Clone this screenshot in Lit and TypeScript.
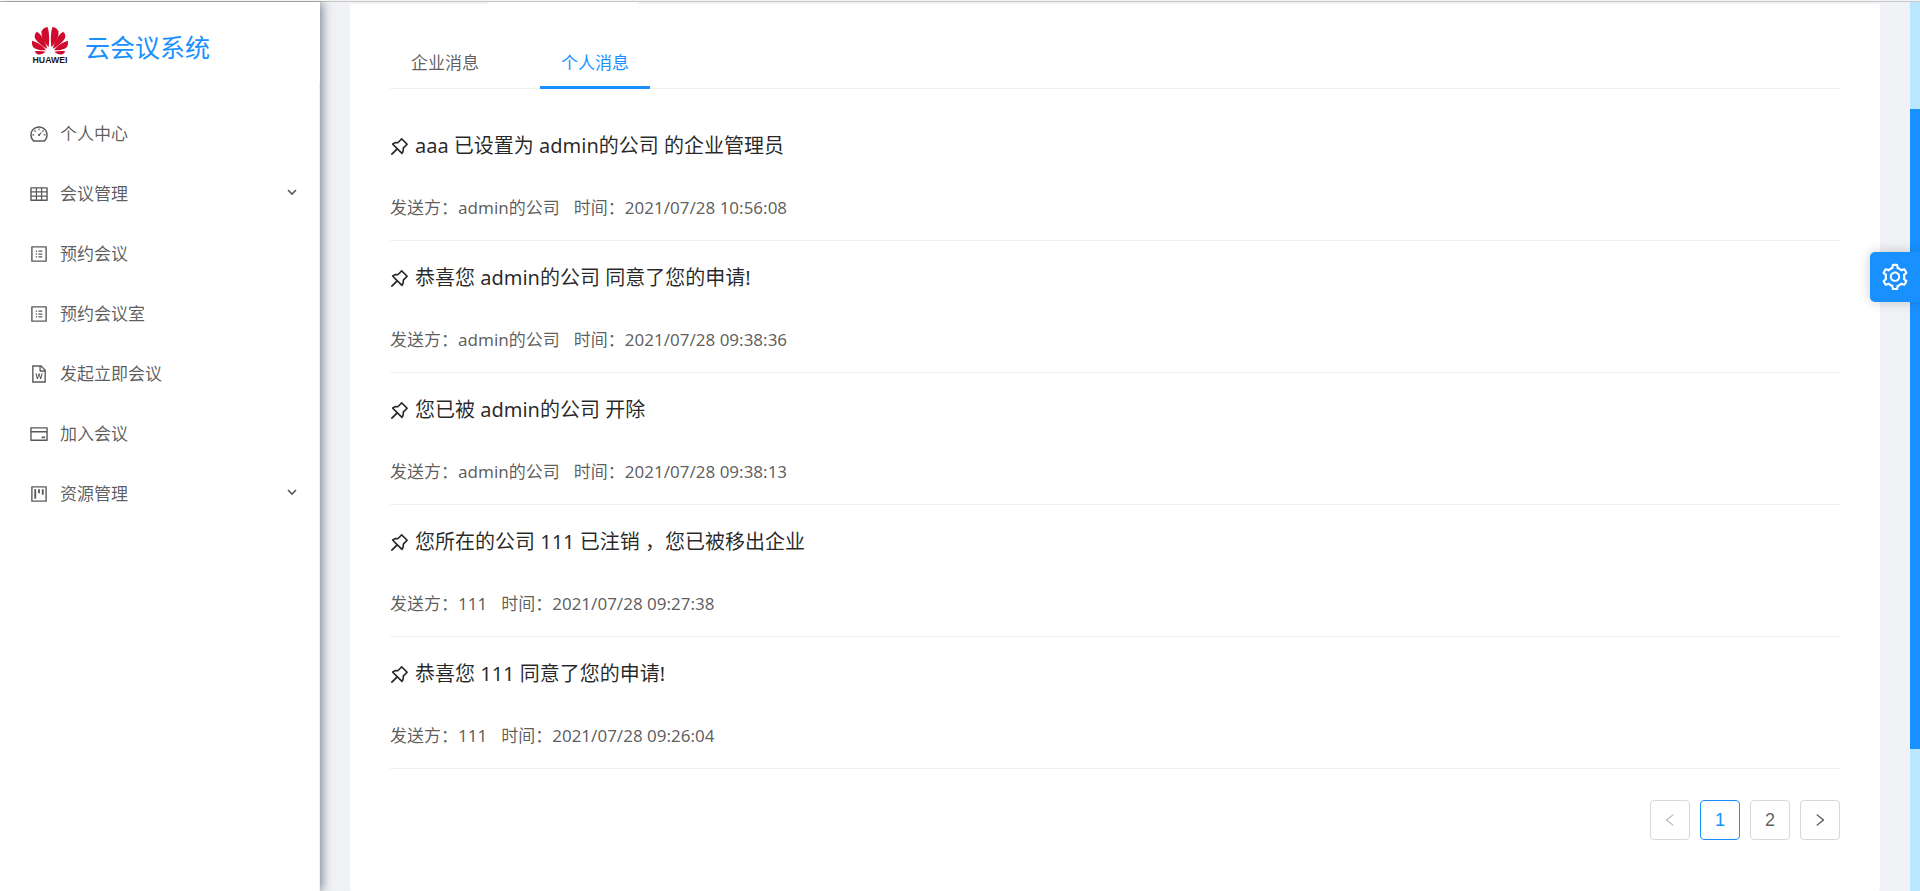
import { LitElement, html, css, svg, nothing } from "lit";
import { customElement, state } from "lit/decorators.js";

const ICONS: Record<string, string[]> = {
  dashboard: [
    "M924.8 385.6a446.700 446.700 0 0 0-96-142.400 446.700 446.700 0 0 0-142.400-96C631.100 123.800 572.500 112 512 112s-119.100 11.800-174.400 35.200a446.700 446.700 0 0 0-142.400 96 446.700 446.700 0 0 0-96 142.400C75.800 440.900 64 499.500 64 560c0 132.700 58.300 257.700 159.900 343.100l1.700 1.400c5.800 4.800 13.100 7.500 20.600 7.500h531.700c7.500 0 14.800-2.700 20.600-7.500l1.700-1.400C901.700 817.700 960 692.700 960 560c0-60.500-11.900-119.100-35.200-174.400zM761.400 836H262.600A371.120 371.120 0 0 1 140 560c0-99.400 38.700-192.800 109-263 70.300-70.300 163.700-109 263-109 99.400 0 192.800 38.700 263 109 70.300 70.300 109 163.700 109 263 0 105.600-44.500 205.500-122.600 276z",
    "M623.500 421.500a8.030 8.030 0 0 0-11.300 0L527.700 506c-18.700-5-39.400-.2-54.100 14.500a55.950 55.950 0 0 0 0 79.200 55.950 55.950 0 0 0 79.200 0 55.870 55.870 0 0 0 14.500-54.100l84.500-84.500c3.100-3.100 3.100-8.200 0-11.300l-28.300-28.300zM490 320h44c4.400 0 8-3.600 8-8v-80c0-4.400-3.600-8-8-8h-44c-4.400 0-8 3.600-8 8v80c0 4.400 3.600 8 8 8zm260 218v44c0 4.400 3.600 8 8 8h80c4.400 0 8-3.600 8-8v-44c0-4.400-3.600-8-8-8h-80c-4.400 0-8 3.600-8 8zm12.700-197.200l-31.100-31.100a8.030 8.030 0 0 0-11.300 0l-56.600 56.600a8.030 8.030 0 0 0 0 11.300l31.100 31.100c3.100 3.100 8.200 3.100 11.300 0l56.600-56.600c3.100-3.100 3.100-8.200 0-11.300zm-458.600-31.100a8.030 8.030 0 0 0-11.300 0l-31.100 31.100a8.030 8.030 0 0 0 0 11.300l56.600 56.600c3.100 3.100 8.200 3.100 11.300 0l31.100-31.100c3.100-3.100 3.100-8.200 0-11.300l-56.600-56.600zM262 530h-80c-4.400 0-8 3.600-8 8v44c0 4.400 3.600 8 8 8h80c4.400 0 8-3.600 8-8v-44c0-4.400-3.600-8-8-8z",
  ],
  table: [
    "M928 160H96c-17.700 0-32 14.300-32 32v640c0 17.700 14.300 32 32 32h832c17.700 0 32-14.300 32-32V192c0-17.700-14.300-32-32-32zm-40 208H676V232h212v136zm0 224H676V432h212v160zM412 432h200v160H412V432zm200-64H412V232h200v136zm-476 64h212v160H136V432zm0-200h212v136H136V232zm0 424h212v136H136V656zm276 0h200v136H412V656zm476 136H676V656h212v136z",
  ],
  profile: [
    "M880 112H144c-17.700 0-32 14.300-32 32v736c0 17.700 14.300 32 32 32h736c17.700 0 32-14.300 32-32V144c0-17.700-14.300-32-32-32zm-40 728H184V184h656v656z",
    "M492 400h184c4.400 0 8-3.600 8-8v-48c0-4.400-3.600-8-8-8H492c-4.400 0-8 3.600-8 8v48c0 4.400 3.600 8 8 8zm0 144h184c4.400 0 8-3.600 8-8v-48c0-4.400-3.600-8-8-8H492c-4.400 0-8 3.600-8 8v48c0 4.400 3.600 8 8 8zm0 144h184c4.400 0 8-3.600 8-8v-48c0-4.400-3.600-8-8-8H492c-4.400 0-8 3.600-8 8v48c0 4.400 3.600 8 8 8zM340 368a40 40 0 1 0 80 0 40 40 0 1 0-80 0zm0 144a40 40 0 1 0 80 0 40 40 0 1 0-80 0zm0 144a40 40 0 1 0 80 0 40 40 0 1 0-80 0z",
  ],
  word: [
    "M854.600 288.600L639.400 73.400c-6-6-14.100-9.400-22.600-9.400H192c-17.700 0-32 14.300-32 32v832c0 17.700 14.300 32 32 32h640c17.700 0 32-14.300 32-32V311.300c0-8.500-3.400-16.700-9.400-22.700zM790.200 326H602V137.800L790.200 326zm1.800 562H232V136h302v216a42 42 0 0 0 42 42h216v494z",
    "M528.100 472h-32.200c-5.500 0-10.300 3.700-11.600 9.100L434.600 680l-46.100-198.700c-1.300-5.400-6.100-9.300-11.700-9.300h-35.400a12.020 12.020 0 0 0-11.600 15.100l74.200 276c1.400 5.200 6.200 8.900 11.600 8.900h32c5.400 0 10.200-3.600 11.600-8.900l52.800-197 52.800 197c1.400 5.200 6.200 8.900 11.600 8.900h31.800c5.400 0 10.200-3.600 11.600-8.900l74.400-276a12.040 12.040 0 0 0-11.600-15.100H647c-5.600 0-10.400 3.900-11.700 9.300l-45.800 199.100-49.800-199.300c-1.300-5.400-6.100-9.100-11.600-9.100z",
  ],
  card: [
    "M928 160H96c-17.700 0-32 14.300-32 32v640c0 17.700 14.300 32 32 32h832c17.700 0 32-14.300 32-32V192c0-17.700-14.300-32-32-32zm-792 72h752v120H136V232zm752 560H136V440h752v352zm-237-64h165c4.400 0 8-3.600 8-8v-72c0-4.400-3.600-8-8-8H651c-4.400 0-8 3.600-8 8v72c0 4.400 3.600 8 8 8z",
  ],
  project: [
    "M280 752h80c4.400 0 8-3.600 8-8V280c0-4.400-3.600-8-8-8h-80c-4.400 0-8 3.600-8 8v464c0 4.400 3.600 8 8 8zm192-280h80c4.400 0 8-3.600 8-8V280c0-4.400-3.600-8-8-8h-80c-4.400 0-8 3.600-8 8v184c0 4.400 3.600 8 8 8zm192 72h80c4.400 0 8-3.600 8-8V280c0-4.400-3.600-8-8-8h-80c-4.400 0-8 3.600-8 8v256c0 4.400 3.600 8 8 8z",
    "M880 112H144c-17.700 0-32 14.300-32 32v736c0 17.700 14.300 32 32 32h736c17.700 0 32-14.300 32-32V144c0-17.700-14.300-32-32-32zm-40 728H184V184h656v656z",
  ],
  pushpin: [
    "M878.300 392.100L631.900 145.700c-6.500-6.500-15-9.700-23.500-9.700s-17 3.200-23.500 9.700L423.800 306.900c-12.200-1.400-24.500-2-36.800-2-73.200 0-146.400 24.100-206.500 72.300-15.400 12.300-16.600 35.400-2.700 49.400l181.700 181.700-215.400 215.200a15.800 15.800 0 0 0-4.600 9.800l-3.400 37.200c-.9 9.400 6.600 17.400 15.900 17.400.5 0 1 0 1.500-.1l37.200-3.400c3.700-.3 7.200-2 9.800-4.600l215.400-215.400 181.700 181.700c6.500 6.500 15 9.700 23.500 9.700 9.700 0 19.300-4.200 25.900-12.400 56.300-70.300 79.700-158.300 70.200-243.400l161.100-161.100c12.900-12.800 12.900-33.800 0-46.800zM666.200 549.300l-24.500 24.500 3.800 34.400a259.920 259.920 0 0 1-30.400 153.900L262 408.800c12.900-7.100 26.300-13.100 40.300-17.900 27.200-9.400 55.700-14.100 84.700-14.100 9.600 0 19.300.5 28.900 1.600l34.400 3.800 24.500-24.500L608.500 224 800 415.500 666.200 549.300z",
  ],
  left: [
    "M724 218.300V141c0-6.700-7.700-10.400-12.900-6.300L260.300 486.800a31.860 31.860 0 0 0 0 50.300l450.800 352.100c5.300 4.100 12.900.4 12.900-6.300v-77.300c0-4.900-2.300-9.600-6.100-12.600l-360-281 360-281.100c3.800-3 6.100-7.700 6.100-12.600z",
  ],
  right: [
    "M765.700 486.800L314.900 134.700A7.970 7.970 0 0 0 302 141v77.300c0 4.900 2.300 9.600 6.100 12.600l360 281.100-360 281.100c-3.900 3-6.100 7.700-6.100 12.600V883c0 6.700 7.700 10.400 12.900 6.300l450.800-352.100a31.960 31.960 0 0 0 0-50.400z",
  ],
  setting: [
    "M924.800 625.700l-65.500-56c3.100-19 4.700-38.400 4.700-57.800s-1.600-38.800-4.700-57.800l65.500-56a32.030 32.030 0 0 0 9.300-35.200l-.9-2.600a443.740 443.740 0 0 0-79.700-137.900l-1.800-2.100a32.120 32.120 0 0 0-35.100-9.500l-81.300 28.900c-30-24.600-63.500-44-99.700-57.600l-15.700-85a32.050 32.050 0 0 0-25.800-25.700l-2.700-.5c-52.100-9.400-106.900-9.400-159 0l-2.700.5a32.050 32.050 0 0 0-25.800 25.700l-15.800 85.400a351.860 351.860 0 0 0-99 57.400l-81.900-29.100a32 32 0 0 0-35.100 9.500l-1.800 2.100a446.020 446.020 0 0 0-79.700 137.900l-.9 2.600c-4.500 12.500-.8 26.500 9.300 35.200l66.300 56.600c-3.100 18.800-4.600 38-4.600 57.100 0 19.200 1.500 38.400 4.600 57.100L99 625.500a32.030 32.030 0 0 0-9.300 35.200l.9 2.600c18.100 50.400 44.900 96.900 79.700 137.900l1.800 2.100a32.120 32.120 0 0 0 35.100 9.500l81.900-29.100c29.800 24.500 63.100 43.900 99 57.400l15.800 85.400a32.050 32.050 0 0 0 25.800 25.700l2.700.5a449.400 449.400 0 0 0 159 0l2.700-.5a32.050 32.050 0 0 0 25.800-25.700l15.700-85a350 350 0 0 0 99.700-57.600l81.300 28.900a32 32 0 0 0 35.100-9.500l1.800-2.100c34.800-41.100 61.600-87.500 79.700-137.900l.9-2.600c4.500-12.300.8-26.300-9.300-35zM788.300 465.900c2.500 15.100 3.800 30.600 3.800 46.100s-1.300 31-3.800 46.100l-6.600 40.100 74.700 63.900a370.030 370.030 0 0 1-42.600 73.600L721 702.800l-31.400 25.800c-23.900 19.600-50.500 35-79.300 45.800l-38.100 14.300-17.900 97a377.500 377.500 0 0 1-85 0l-17.900-97.200-37.800-14.500c-28.500-10.800-55-26.200-78.700-45.700l-31.400-25.900-93.400 33.200c-17-22.900-31.200-47.600-42.600-73.600l75.500-64.500-6.500-40c-2.400-14.900-3.700-30.300-3.700-45.500 0-15.300 1.200-30.600 3.700-45.500l6.500-40-75.500-64.500c11.300-26.100 25.600-50.700 42.600-73.600l93.400 33.200 31.400-25.900c23.700-19.500 50.200-34.900 78.700-45.700l37.900-14.300 17.900-97.200c28.100-3.200 56.800-3.200 85 0l17.900 97 38.100 14.300c28.700 10.800 55.400 26.200 79.300 45.800l31.400 25.800 92.800-32.900c17 22.900 31.200 47.600 42.600 73.600L781.800 426l6.500 39.900z",
    "M512 326c-97.200 0-176 78.800-176 176s78.800 176 176 176 176-78.800 176-176-78.800-176-176-176zm79.200 255.200A111.600 111.600 0 0 1 512 614c-29.900 0-58-11.700-79.200-32.800A111.600 111.600 0 0 1 400 502c0-29.900 11.700-58 32.800-79.200C454 401.600 482.100 390 512 390c29.900 0 58 11.600 79.200 32.800A111.600 111.600 0 0 1 624 502c0 29.900-11.700 58-32.800 79.200z",
  ],
};

const icon = (name: string) => html`
  <svg class="icon" viewBox="0 0 1024 1024" aria-hidden="true">
    ${ICONS[name].map((d) => svg`<path d=${d} />`)}
  </svg>
`;

interface MenuEntry {
  icon: string;
  label: string;
  children?: boolean;
}

interface Message {
  title: string;
  sender: string;
  time: string;
}

const MENU: MenuEntry[] = [
  { icon: "dashboard", label: "个人中心" },
  { icon: "table", label: "会议管理", children: true },
  { icon: "profile", label: "预约会议" },
  { icon: "profile", label: "预约会议室" },
  { icon: "word", label: "发起立即会议" },
  { icon: "card", label: "加入会议" },
  { icon: "project", label: "资源管理", children: true },
];

const MESSAGES: Message[] = [
  { title: "aaa 已设置为 admin的公司 的企业管理员", sender: "admin的公司", time: "2021/07/28 10:56:08" },
  { title: "恭喜您 admin的公司 同意了您的申请!", sender: "admin的公司", time: "2021/07/28 09:38:36" },
  { title: "您已被 admin的公司 开除", sender: "admin的公司", time: "2021/07/28 09:38:13" },
  { title: "您所在的公司 111 已注销 ，您已被移出企业", sender: "111", time: "2021/07/28 09:27:38" },
  { title: "恭喜您 111 同意了您的申请!", sender: "111", time: "2021/07/28 09:26:04" },
];

const reset = css`
  * {
    box-sizing: border-box;
  }
  button {
    font: inherit;
    color: inherit;
    background: none;
    border: 0;
    padding: 0;
    cursor: pointer;
  }
  ul {
    list-style: none;
    margin: 0;
    padding: 0;
  }
  a {
    color: inherit;
    text-decoration: none;
  }
  .icon {
    display: block;
    flex: none;
    width: 20px;
    height: 20px;
    fill: currentColor;
  }
`;

@customElement("side-menu")
export class SideMenu extends LitElement {
  static styles = [
    reset,
    css`
      :host {
        display: flex;
        flex-direction: column;
        background: #fff;
        box-shadow: 2px 0 10px rgba(0, 21, 41, 0.5);
      }
      .brand {
        display: flex;
        align-items: center;
        gap: 15px;
        height: 80px;
        padding: 10px 30px 0;
        color: #1890ff;
        font-size: 25px;
        line-height: 40px;
      }
      .logo {
        display: block;
        width: 40px;
        height: 40px;
      }
      .petal {
        fill: #cf0a2c;
      }
      .wordmark {
        font: 700 24px "Liberation Sans", Arial, sans-serif;
        fill: #231815;
      }
      .nav {
        flex: 1;
        border-right: 1px solid #f0f0f0;
      }
      .menu {
        display: grid;
        gap: 10px;
        padding-top: 27px;
      }
      .entry {
        display: flex;
        align-items: center;
        gap: 11px;
        width: 100%;
        height: 50px;
        padding: 0 21px 0 29px;
        text-align: left;
      }
      .label {
        flex: 1;
      }
      .chevron {
        display: block;
        width: 12px;
        height: 14px;
        fill: none;
        stroke: currentColor;
        stroke-width: 1.6;
      }
    `,
  ];

  render() {
    const petals = [
      "M46 56C36 44 24 28 27 12 29 5 36 1 43 0 48 12 49 38 46 56Z",
      "M42 60C32 55 14 42 9 31 6 24 9 17 14 13 26 20 39 42 42 60Z",
      "M39 64C28 65 9 62 3 54 0 49 0 43 1 38 15 42 32 53 39 64Z",
      "M38 68C33 73 23 77 16 75 12 74 10 71 8 67 18 65 29 66 38 68Z",
    ];
    return html`
      <div class="brand">
        <svg class="logo" viewBox="-5 0 110 110" role="img" aria-label="HUAWEI">
          <g class="petal">
            ${petals.map((d) => svg`<path d=${d} />`)}
            <g transform="translate(100 0) scale(-1 1)">${petals.map((d) => svg`<path d=${d} />`)}</g>
          </g>
          <text class="wordmark" x="50" y="98" text-anchor="middle">HUAWEI</text>
        </svg>
        <span>云会议系统</span>
      </div>
      <nav class="nav">
        <ul class="menu">
          ${MENU.map(
            (m) => html`<li>
              ${m.children
                ? html`<button class="entry" type="button" aria-expanded="false">
                    ${icon(m.icon)}<span class="label">${m.label}</span>
                    <svg class="chevron" viewBox="0 0 12 14" aria-hidden="true"><path d="M2 3 6 7 10 3" /></svg>
                  </button>`
                : html`<a class="entry" href="#">${icon(m.icon)}<span class="label">${m.label}</span></a>`}
            </li>`
          )}
        </ul>
      </nav>
    `;
  }
}

@customElement("message-panel")
export class MessagePanel extends LitElement {
  @state() private tab = 1;
  @state() private page = 1;

  static styles = [
    reset,
    css`
      :host {
        display: block;
        background: #fff;
        border-radius: 2px;
        padding: 30px 40px;
      }
      .tabs {
        display: flex;
        gap: 40px;
        border-bottom: 1px solid #f0f0f0;
      }
      .tab {
        height: 55px;
        padding: 6px 21px 0;
        margin-bottom: -1px;
        border-bottom: 3px solid transparent;
      }
      .tab[aria-selected="true"] {
        color: #1890ff;
        border-color: #1890ff;
      }
      .message {
        display: grid;
        gap: 31px;
        padding: 41px 0 17px;
        border-bottom: 1px solid #f0f0f0;
      }
      .message + .message {
        padding-top: 21px;
      }
      .title {
        display: flex;
        align-items: center;
        gap: 4px;
        margin: 0;
        color: rgba(0, 0, 0, 0.85);
        font-size: 20px;
        font-weight: inherit;
        line-height: 32px;
      }
      .title .icon {
        width: 23px;
        height: 23px;
        margin-left: -2px;
      }
      .meta {
        display: flex;
        gap: 14px;
        margin: 0;
        line-height: 30px;
      }
      .pager {
        display: flex;
        justify-content: flex-end;
        gap: 10px;
        padding-top: 31px;
      }
      .page {
        display: grid;
        place-items: center;
        width: 40px;
        height: 40px;
        border: 1px solid #d9d9d9;
        border-radius: 4px;
        font-family: "Liberation Sans", Arial, sans-serif;
        font-size: 18px;
      }
      .page[aria-current="page"] {
        color: #1890ff;
        border-color: #1890ff;
      }
      .page:disabled {
        color: rgba(0, 0, 0, 0.25);
      }
      .page .icon {
        width: 16px;
        height: 16px;
      }
    `,
  ];

  render() {
    return html`
      <div class="tabs" role="tablist">
        ${["企业消息", "个人消息"].map(
          (t, i) => html`<button
            class="tab"
            type="button"
            role="tab"
            aria-selected=${this.tab === i ? "true" : "false"}
            @click=${() => (this.tab = i)}
          >${t}</button>`
        )}
      </div>
      <ul>
        ${MESSAGES.map(
          (m) => html`<li class="message">
            <h4 class="title">${icon("pushpin")}<span>${m.title}</span></h4>
            <p class="meta"><span>发送方：${m.sender}</span><span>时间：${m.time}</span></p>
          </li>`
        )}
      </ul>
      <nav class="pager" aria-label="分页">
        <button class="page" type="button" aria-label="上一页" ?disabled=${this.page === 1} @click=${() => this.page--}>
          ${icon("left")}
        </button>
        ${[1, 2].map(
          (n) => html`<button
            class="page"
            type="button"
            aria-current=${this.page === n ? "page" : nothing}
            @click=${() => (this.page = n)}
          >${n}</button>`
        )}
        <button class="page" type="button" aria-label="下一页" ?disabled=${this.page === 2} @click=${() => this.page++}>
          ${icon("right")}
        </button>
      </nav>
    `;
  }
}

@customElement("app-root")
export class AppRoot extends LitElement {
  static styles = [
    reset,
    css`
      :host {
        display: block;
        height: 100vh;
        border-top: 1px solid #f2f4f4;
        box-sizing: border-box;
        overflow: hidden;
        background: #f0f2f5;
        color: rgba(0, 0, 0, 0.65);
        font-family: "Noto Sans", "Noto Sans CJK SC", sans-serif;
        font-size: 17px;
        line-height: 28px;
      }
      .layout {
        display: grid;
        grid-template-columns: 320px 1fr 10px;
        height: 100%;
        border-top: 1px solid #c8c8c8;
      }
      .content {
        display: grid;
        grid-template-rows: 2px 1fr;
        padding: 0 30px;
      }
      .notch {
        width: 150px;
        margin-left: 138px;
        background: #fff;
      }
      .track {
        display: grid;
        grid-template-rows: 107fr 640fr 142fr;
        background: #bae7ff;
      }
      .thumb {
        grid-row: 2;
        background: #1890ff;
      }
      .settings {
        position: fixed;
        top: 252px;
        right: 0;
        display: grid;
        place-items: center;
        width: 50px;
        height: 50px;
        border-radius: 5px 0 0 5px;
        background: #1890ff;
        color: #fff;
        box-shadow: 0 0 12px rgba(0, 0, 0, 0.2);
      }
      .settings .icon {
        width: 30px;
        height: 30px;
      }
    `,
  ];

  render() {
    return html`
      <div class="layout">
        <side-menu></side-menu>
        <main class="content">
          <div class="notch"></div>
          <message-panel></message-panel>
        </main>
        <div class="track"><div class="thumb"></div></div>
      </div>
      <button class="settings" type="button" aria-label="设置">${icon("setting")}</button>
    `;
  }
}
